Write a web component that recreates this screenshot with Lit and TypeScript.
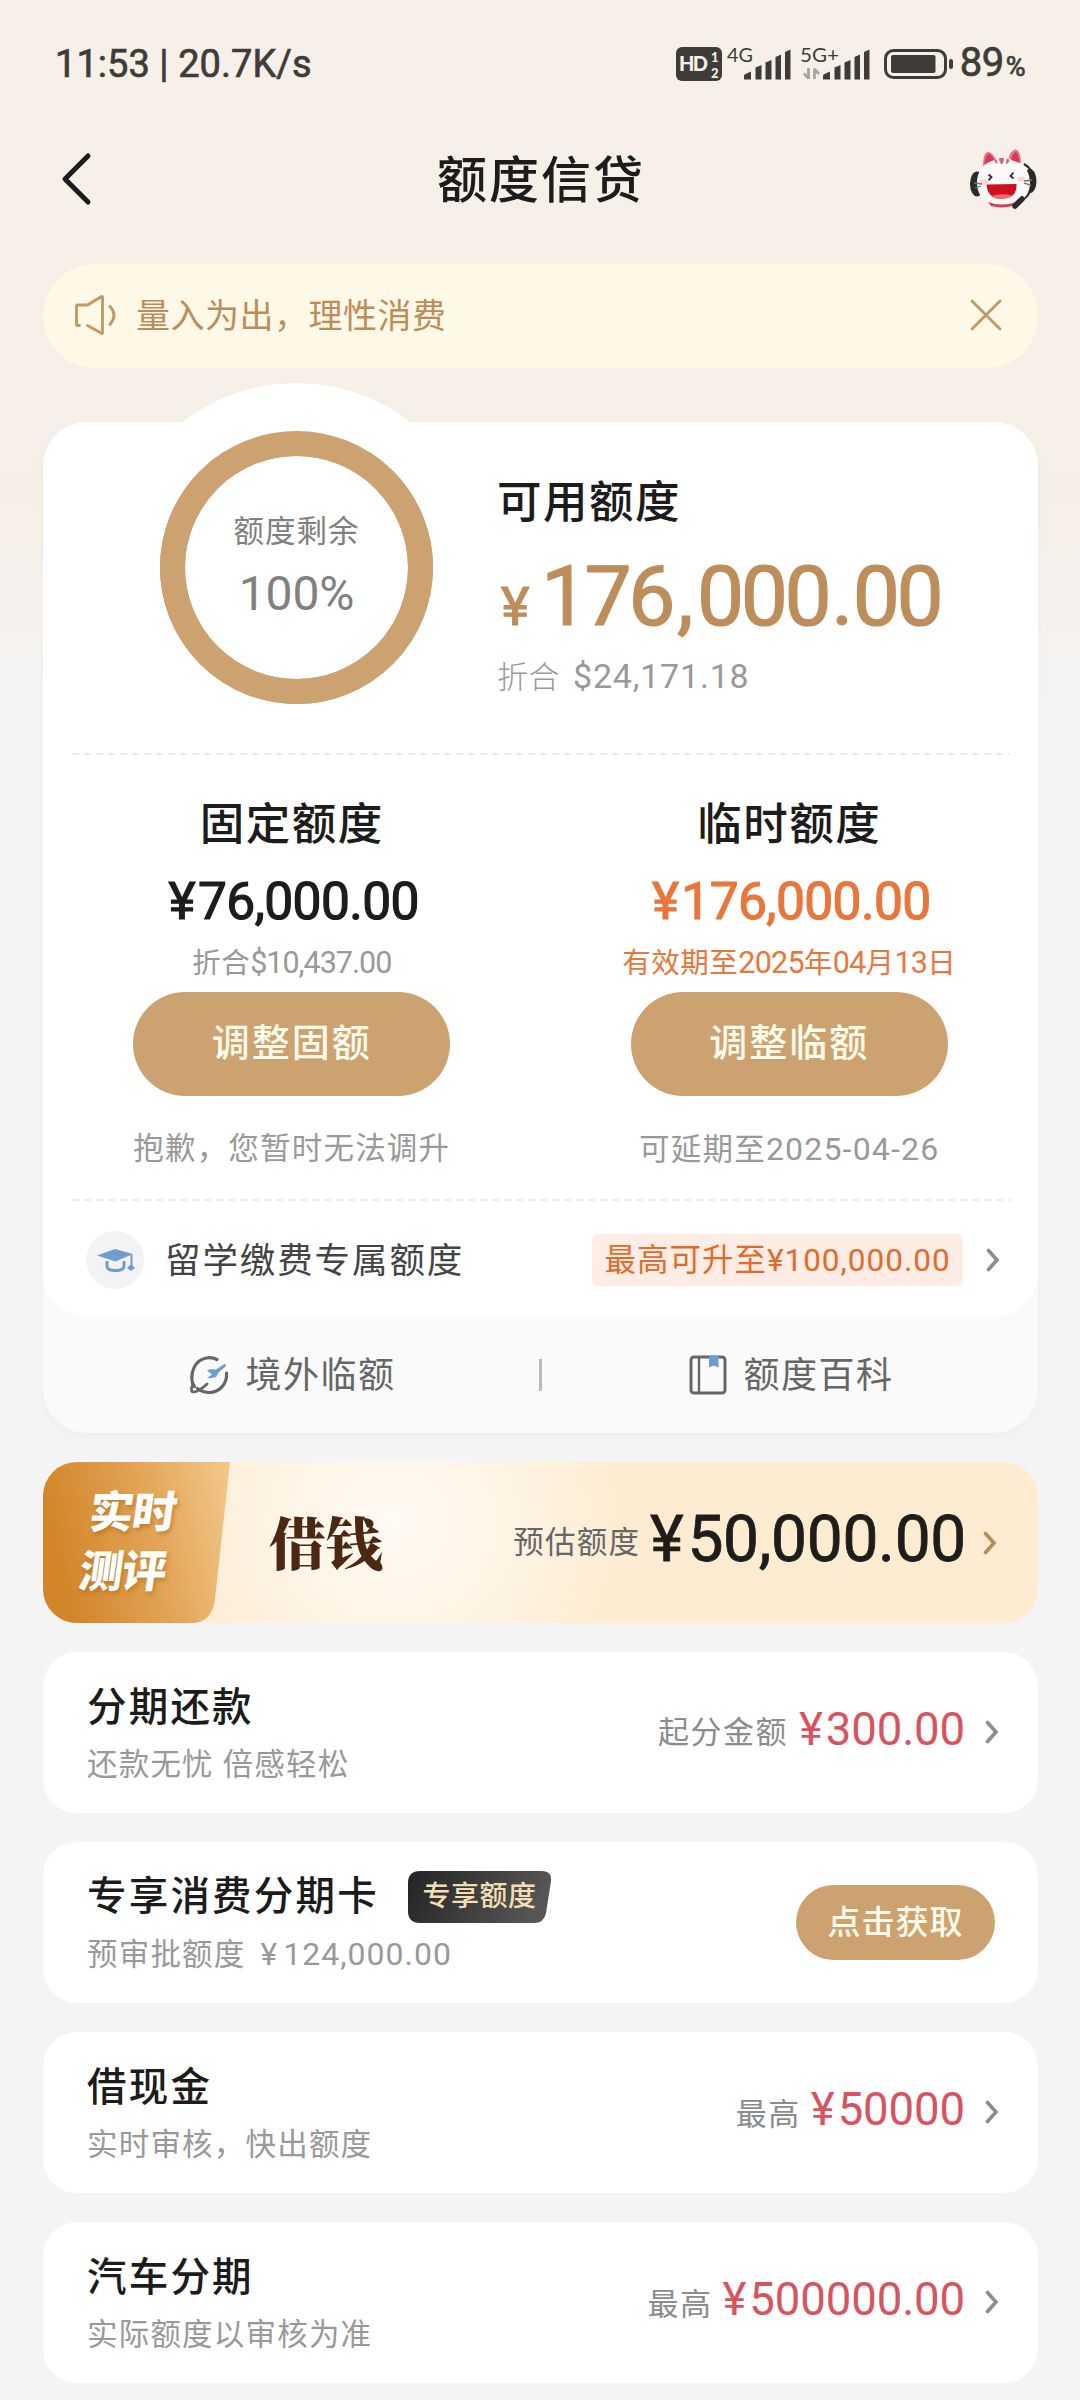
import { LitElement, html, svg, css, nothing } from "lit";
import { customElement, property } from "lit/decorators.js";

const chevron = (color: string) => html`<svg class="chev" width="14" height="24" viewBox="0 0 14 24" fill="none">
  <path d="M2.500 2.500 11 12 2.500 21.500" stroke=${color} stroke-width="3.600" stroke-linejoin="miter" stroke-linecap="round" />
</svg>`;

const bars = () => svg`
  <path d="M0 30.500V27q0-1.500 1.500-2L7 22.500V30.500z" />
  <path d="M11.500 30.500V18.500L17.500 16V30.500z" />
  <path d="M21.500 30.500V13.500L27.500 11V30.500z" />
  <path d="M31.500 30.500V8L37 5.500V30.500z" />
  <path d="M41 30.500V3L46.500.5V30.500z" />`;

@customElement("status-bar")
class StatusBar extends LitElement {
  static styles = css`
    :host {
      display: flex;
      align-items: center;
      justify-content: space-between;
      height: 127px;
      padding: 0 55px 0 55px;
      box-sizing: border-box;
      color: #3f3c38;
      font-size: 38px;
      -webkit-text-stroke: 0.700px #3f3c38;
    }
    .time { letter-spacing: 0.050px; line-height: 44px; }
    .right { display: flex; align-items: center; height: 44px; }
    .right svg { -webkit-text-stroke: 0; }
    .pct { font-size: 40px; line-height: 44px; margin-left: 6px; letter-spacing: -0.500px; padding-top: 3px; }
    .sign { font-size: 27px; margin-left: 2px; }
    text { font-family: Lato, sans-serif; fill: #3f3c38; }
    .hd { fill: #f7f0e9; font-weight: 900; }
  `;
  render() {
    return html`
      <span class="time">11:53 | 20.7K/s</span>
      <div class="right">
        <svg width="280" height="44" viewBox="0 0 280 44">
          <rect x="2" y="5" width="46" height="34" rx="6" fill="#3f3c38" />
          <text class="hd" x="5" y="29" font-size="20" textLength="29">HD</text>
          <text class="hd" x="37" y="19.500" font-size="13">1</text>
          <text class="hd" x="37" y="35.500" font-size="13">2</text>
          <text x="53" y="20" font-size="20" textLength="26" lengthAdjust="spacingAndGlyphs">4G</text>
          <g transform="translate(70 7)" fill="#3f3c38">${bars()}</g>
          <text x="126" y="20" font-size="20" textLength="39" lengthAdjust="spacingAndGlyphs">5G+</text>
          <path d="M134.500 26V37M134.500 36.500L130 31.500M140.500 37V26.500M140.500 27L145 32" fill="none" stroke="#aaa49e" stroke-width="2.800" />
          <g transform="translate(149 7)" fill="#3f3c38">${bars()}</g>
          <rect x="211.500" y="8.500" width="60" height="27" rx="8" fill="none" stroke="#3f3c38" stroke-width="3" />
          <rect x="217" y="13" width="44.500" height="18" rx="2" fill="#3f3c38" />
          <rect x="275" y="17" width="4" height="10" rx="2" fill="#3f3c38" />
        </svg>
        <span class="pct">89<span class="sign">%</span></span>
      </div>`;
  }
}

@customElement("offer-card")
class OfferCard extends LitElement {
  @property() name = "";
  @property() note = "";
  @property() noteAmount = "";
  @property() label = "";
  @property() amount = "";
  @property() badge = "";
  @property() action = "";

  static styles = css`
    :host {
      display: flex;
      align-items: center;
      justify-content: space-between;
      height: 161px;
      box-sizing: border-box;
      padding: 0 43px 0 44px;
      background: #fff;
      border-radius: 34px;
    }
    .left { display: flex; flex-direction: column; gap: 11px; padding-top: 5px; }
    .head { display: flex; align-items: center; height: 48px; gap: 29px; }
    .name { font-size: 39.500px; letter-spacing: 2.200px; color: #1c1c1c; font-weight: 500; line-height: 48px; }
    .note { font-size: 30.500px; letter-spacing: 1.200px; color: #999; line-height: 44px; white-space: pre; }
    .yen { font-size: 31.500px; margin: 0 5px 0 6px; }
    .num { font-size: 32px; letter-spacing: 1px; }
    .badge {
      position: relative;
      display: flex;
      align-items: center;
      justify-content: center;
      width: 143px;
      height: 52px;
      color: #f2ddb4;
      font-size: 28px;
      font-weight: 500;
      letter-spacing: 0.500px;
      line-height: 52px;
    }
    .badge svg { position: absolute; inset: 0; }
    .badge span { position: relative; }
    .right { display: flex; align-items: center; padding-bottom: 6px; }
    .label { font-size: 31px; letter-spacing: 1.500px; color: #8c8c8c; line-height: 40px; padding-top: 6px; margin-right: 11px; }
    .label.low { padding-top: 11px; margin-right: 10px; }
    .amount { display: flex; font-size: 45.500px; color: #d9535f; line-height: 52px; margin-right: 20px; letter-spacing: -0.100px; }
    .amount span { margin-right: 3px; }
    .chev { margin-top: 4px; margin-right: -4px; }
    .action {
      width: 199px;
      height: 75px;
      border-radius: 38px;
      background: #cca270;
      color: #fffbea;
      font-size: 33px;
      letter-spacing: 1px;
      line-height: 76px;
      font-weight: 500;
      text-align: center;
    }
  `;
  render() {
    return html`
      <div class="left">
        <div class="head">
          <span class="name">${this.name}</span>
          ${this.badge
            ? html`<span class="badge"><svg width="143" height="52" viewBox="0 0 143 52">
                <defs><linearGradient id="g" x1="0" y1="0" x2="1" y2="0.200">
                  <stop offset="0" stop-color="#232323" /><stop offset="1" stop-color="#565656" />
                </linearGradient></defs>
                <path d="M12 0H134Q144 0 143 10L138 42Q136 52 126 52H12Q0 52 0 40V12Q0 0 12 0Z" fill="url(#g)" />
              </svg><span>${this.badge}</span></span>`
            : nothing}
        </div>
        <span class="note">${this.note}${this.noteAmount
          ? html`<span class="yen"> ¥</span><span class="num">${this.noteAmount}</span>`
          : nothing}</span>
      </div>
      ${this.action
        ? html`<span class="action">${this.action}</span>`
        : html`<div class="right">
            <span class="label ${this.label.length < 3 ? "low" : ""}">${this.label}</span>
            <div class="amount"><span>¥</span>${this.amount}</div>
            ${chevron("#8c8c8c")}
          </div>`}`;
  }
}

@customElement("app-root")
class AppRoot extends LitElement {
  static styles = css`
    :host {
      display: block;
      width: 1080px;
      height: 2400px;
      overflow: hidden;
      background: linear-gradient(#f7f0e9 0, #f6efe7 500px, #f4f4f4 730px);
      font-family: Roboto, "Noto Sans CJK SC", sans-serif;
      color: #1c1c1c;
    }
    .nav {
      display: flex;
      align-items: center;
      justify-content: space-between;
      height: 104px;
      padding: 0 42px 0 60px;
    }
    .nav h1 { margin: 3px 0 0; font-size: 50px; letter-spacing: 2px; font-weight: 500; line-height: 60px; padding-left: 18px; }
    .page { display: flex; flex-direction: column; padding: 33px 42px 0 43px; }
    .notice {
      display: flex;
      align-items: center;
      height: 104px;
      border-radius: 52px;
      background: #fef8e7;
      color: #bd8c5b;
      font-size: 34px;
      letter-spacing: 0.500px;
      line-height: 44px;
      padding: 0 36px 0 31px;
    }
    .notice span { flex: 1; padding-left: 18px; }
    .notice svg { margin-top: -2px; }

    .card {
      margin-top: 54px;
      height: 1011px;
      border-radius: 44px;
      background: #fafafa;
      box-shadow: 0 4px 8px rgba(0, 0, 0, 0.025);
    }
    .main { height: 895px; border-radius: 44px; background: #fff; }
    .hero { display: flex; height: 332px; align-items: flex-start; }
    .ring {
      position: relative;
      display: flex;
      flex-direction: column;
      align-items: center;
      justify-content: center;
      gap: 15px;
      width: 223px;
      height: 223px;
      margin: 9px 0 0 117px;
      border: 25px solid #cca270;
      border-radius: 50%;
      color: #808080;
    }
    .ring::before {
      content: "";
      position: absolute;
      inset: -73px;
      border-radius: 50%;
      background: #fff;
      clip-path: inset(0 0 300px 0);
    }
    .ring::after {
      content: "";
      position: absolute;
      inset: -25px;
      border-radius: 50%;
      border: 25px solid #cca270;
    }
    .ring-label { font-size: 30.500px; letter-spacing: 1px; line-height: 40px; margin-top: -3px; }
    .ring-value { font-size: 48px; line-height: 54px; letter-spacing: -0.200px; }
    .avail { display: flex; flex-direction: column; margin-left: 64px; padding-top: 55px; }
    h2 { margin: 0; font-size: 44.500px; letter-spacing: 1.500px; font-weight: 500; line-height: 52px; }
    .big { display: flex; align-items: baseline; color: #bd8e5c; margin-top: 23px; height: 90px; line-height: 90px; font-size: 84px; letter-spacing: -3.500px; -webkit-text-stroke: 1.200px #bd8e5c; }
    .big .yen { font-size: 54px; margin: 0 15px 0 4px; }
    .big .comma { margin: 0 7px 0 5px; }
    .big .dot { margin: 0 3px; }
    .conv { font-size: 31px; color: #999; line-height: 44px; margin-top: 12px; letter-spacing: 0.500px; display: flex; align-items: baseline; gap: 13px; font-weight: 300; }
    .conv .num { font-size: 34px; letter-spacing: 0.800px; font-weight: 400; }
    .dash { height: 2px; margin: -1px 28px -1px 29px; background: repeating-linear-gradient(90deg, #ebebeb 0 7px, transparent 7px 12px); }
    .cols { display: grid; grid-template-columns: 1fr 1fr; height: 446px; }
    .col { display: flex; flex-direction: column; align-items: center; padding-top: 45px; }
    .sum { display: flex; font-size: 51.500px; -webkit-text-stroke: 1.200px currentColor; line-height: 60px; margin-top: 21px; letter-spacing: -0.600px; }
    .sum span { margin: 0 3px 0 4px; }
    .small { font-size: 28.500px; letter-spacing: 0.500px; color: #999; line-height: 36px; margin-top: 13px; }
    .small .num { font-size: 30.500px; letter-spacing: -1px; }
    .orange { color: #e9763b; }
    .small.orange .num { letter-spacing: -0.800px; }
    .btn {
      width: 317px;
      height: 104px;
      margin-top: 10px;
      border-radius: 52px;
      background: #cca270;
      color: #fffbea;
      font-size: 38px;
      letter-spacing: 2px;
      font-weight: 500;
      line-height: 103px;
      text-align: center;
    }
    .hint { font-size: 30.500px; letter-spacing: 1.200px; color: #999; line-height: 40px; margin-top: 33px; }
    .hint .num { font-size: 32px; letter-spacing: 1.200px; }
    .study { display: flex; align-items: center; height: 117px; padding: 1px 38px 0 43px; }
    .study .name { font-size: 35.500px; letter-spacing: 1.900px; color: #444; line-height: 44px; margin-left: 21px; padding-top: 2px; flex: 1; }
    .tag { height: 52px; width: 371px; text-align: center; background: #feede4; border-radius: 6px; color: #e36a2b; font-size: 31.500px; letter-spacing: 1px; line-height: 54px; margin-right: 23px; }
    .links { display: flex; align-items: center; height: 115px; color: #666; font-size: 36px; line-height: 44px; letter-spacing: 1.500px; }
    .link { flex: 1; display: flex; align-items: center; justify-content: center; gap: 16px; padding-left: 3px; }
    .link span { padding-top: 2px; }
    .sep { width: 3px; height: 32px; background: #bbb; }

    .banner {
      display: flex;
      align-items: center;
      height: 161px;
      margin-top: 29px;
      border-radius: 34px;
      overflow: hidden;
      background: radial-gradient(ellipse 230px 220px at 350px 60px, #fffaf3, rgba(255, 249, 240, 0.700) 45%, rgba(253, 236, 209, 0)), #fdecd1;
    }
    .rate { position: relative; width: 188px; height: 161px; flex: none; }
    .rate svg { position: absolute; inset: 0; }
    .rate div {
      position: relative;
      display: flex;
      flex-direction: column;
      padding-top: 22px;
      font-size: 44px;
      font-weight: 900;
      line-height: 59px;
      color: #fff;
      letter-spacing: -1px;
      text-shadow: 2px 3px 4px rgba(160, 90, 10, 0.450);
      transform: skewX(-8deg);
    }
    .rate span:first-child { padding-left: 44px; }
    .rate span:last-child { padding-left: 42px; }
    .borrow { margin-left: 38px; padding-bottom: 6px; flex: 1; color: #4c2813; font-family: "Noto Serif CJK SC", "Noto Serif SC", "Source Han Serif SC", "Noto Sans CJK SC", serif; font-weight: 900; font-size: 57px; line-height: 70px; letter-spacing: 0; }
    .est { font-size: 30.500px; letter-spacing: 1.200px; color: #666; line-height: 40px; margin-right: 10px; }
    .loan { display: flex; font-size: 64px; line-height: 80px; letter-spacing: -0.300px; color: #1f1d1a; padding-bottom: 6px; margin-right: 17px; -webkit-text-stroke: 0.800px #1f1d1a; }
    .loan span { margin-right: 4px; }
    .banner .chev { margin-right: 41px; }
    .list { display: flex; flex-direction: column; gap: 29px; margin-top: 29px; }
  `;

  render() {
    return html`
      <status-bar></status-bar>
      <div class="nav">
        <svg width="34" height="56" viewBox="0 0 34 56" fill="none">
          <path d="M28 5 5 28 28 51" stroke="#1c1c1c" stroke-width="5" stroke-linecap="round" stroke-linejoin="round" />
        </svg>
        <h1>额度信贷</h1>
        <svg width="68" height="60" viewBox="0 0 68 60">
          <ellipse cx="7" cy="35" rx="7" ry="12.500" fill="#2b2a2a" />
          <ellipse cx="60" cy="32" rx="6.500" ry="12" fill="#2b2a2a" />
          <path d="M54 15Q63 20 63 30Q63 43 53 51" fill="none" stroke="#2b2a2a" stroke-width="2.200" />
          <path d="M13 18Q13 3 18.500 3Q24 4 27 14Z" fill="#e9718a" />
          <path d="M38 12Q40 1 45.500.5Q51 1 51 16Z" fill="#e9718a" />
          <path d="M33 9.500C50 8.500 60 20 60 34C60 48 48 57 33 57C18 57 7 48 7 34C7 20 17 10 33 9.500Z" fill="#fdf9f9" />
          <path d="M14.500 15Q16 4.500 19.500 5Q23 7 24 11ZM41 11Q43 3 46 3Q49 6 49.500 14Z" fill="#d83a56" />
          <path d="M24 10Q28 10 27.500 15Q24 13 24 10ZM29 9H34Q34 14 31.500 15.500Q29 13 29 9ZM36.500 9.500Q40 10 39 12.500Q38 15 36 15Z" fill="#d5697a" />
          <path d="M18.500 25.500 21.500 28 18.500 31.500M43.500 23.500 40.500 27 43.500 29.500" fill="none" stroke="#2b2a2a" stroke-width="1.800" />
          <ellipse cx="14" cy="33" rx="4" ry="2.500" fill="#f9d5da" /><ellipse cx="51" cy="30" rx="4" ry="2.500" fill="#f9d5da" />
          <path d="M4 34 12 35M5 39 11 37M54 32 62 31M54 34 61 36" stroke="#77706e" stroke-width="1.300" />
          <path d="M16.500 35.500Q31 35 46.500 35Q47.500 49 32 49.500Q17.500 50 16.500 35.500Z" fill="#cf1020" />
          <path d="M21 47Q31 44 42 46.500Q38 50 31 50Q24 50 21 47Z" fill="#f06a68" />
          <path d="M18 53Q32 58 46 53L44 56.500Q32 60 21 57Z" fill="#d83a56" />
          <path d="M52 50 45 57" stroke="#2b2a2a" stroke-width="5.500" stroke-linecap="round" />
        </svg>
      </div>
      <div class="page">
        <div class="notice">
          <svg width="44" height="42" viewBox="0 0 44 42" fill="none" stroke="#c39666" stroke-width="2.800" stroke-linecap="round" stroke-linejoin="round">
            <path d="M5.500 31.500H4Q2.500 31.500 2.500 30V12.500Q2.500 11 4 11H13.500L27.500 2.500Q28.500 2 28.500 3.500V38.500Q28.500 40 27.500 39.300L13.500 31.500" />
            <path d="M36 12.500Q44 21 36 30.500" />
          </svg>
          <span>量入为出，理性消费</span>
          <svg width="32" height="32" viewBox="0 0 32 32"><path d="M2 2 30 30M30 2 2 30" stroke="#c39666" stroke-width="2.800" stroke-linecap="round" /></svg>
        </div>

        <div class="card">
          <div class="main">
            <div class="hero">
              <div class="ring">
                <span class="ring-label">额度剩余</span>
                <span class="ring-value">100%</span>
              </div>
              <div class="avail">
                <h2>可用额度</h2>
                <div class="big"><span class="yen">¥</span>176<span class="comma">,</span>000<span class="dot">.</span>00</div>
                <div class="conv"><span>折合</span><span class="num">$24,171.18</span></div>
              </div>
            </div>
            <div class="dash"></div>
            <div class="cols">
              <div class="col">
                <h2>固定额度</h2>
                <div class="sum"><span>¥</span>76,000.00</div>
                <div class="small">折合<span class="num">$10,437.00</span></div>
                <div class="btn">调整固额</div>
                <div class="hint">抱歉，您暂时无法调升</div>
              </div>
              <div class="col">
                <h2>临时额度</h2>
                <div class="sum orange"><span>¥</span>176,000.00</div>
                <div class="small orange">有效期至<span class="num">2025</span>年<span class="num">04</span>月<span class="num">13</span>日</div>
                <div class="btn">调整临额</div>
                <div class="hint">可延期至<span class="num">2025-04-26</span></div>
              </div>
            </div>
            <div class="dash"></div>
            <div class="study">
              <svg width="58" height="58" viewBox="0 0 58 58">
                <circle cx="29" cy="29" r="29" fill="#f3f3f3" />
                <path d="M11 24.500 29 18 47 23 29.500 30.500Z" fill="#6f9dd0" />
                <path d="M45.500 24V36" stroke="#6f9dd0" stroke-width="2" />
                <path d="M45 33 49 37 45 40 41 37Z" fill="#6f9dd0" />
                <path d="M21 30V35Q21 39.500 29.500 39.500Q38 39.500 38 35V30" fill="none" stroke="#6f9dd0" stroke-width="3" />
              </svg>
              <span class="name">留学缴费专属额度</span>
              <span class="tag">最高可升至¥100,000.00</span>
              ${chevron("#8c8c8c")}
            </div>
          </div>
          <div class="links">
            <div class="link">
              <svg width="40" height="40" viewBox="0 0 40 40" fill="none" stroke="#666" stroke-width="3.200" stroke-linecap="round">
                <path d="M28 4.500Q23 2 17.500 3C6 5 1 17 3.500 28L5.500 31.500" />
                <path d="M37.500 18C38.500 29 30 37.500 20.500 37.500Q14 37.500 8.500 33.500" />
                <path d="M4 29.500Q1.500 34 3 36.500Q7 39 18 29" stroke-width="2.800" />
                <path d="M35.500 9Q38 9.500 36.500 11.500L29.500 17.500 27 22Q21 24 18.500 22.500L23 19.500 18 15.500Q20 13.500 27 14.500Z" fill="#6f9dd0" stroke="none" />
              </svg>
              <span>境外临额</span>
            </div>
            <div class="sep"></div>
            <div class="link">
              <svg width="38" height="40" viewBox="0 0 38 40" fill="none" stroke="#666" stroke-width="3">
                <rect x="2" y="2" width="34" height="36" rx="3" />
                <path d="M10 2V38" stroke-width="2.400" />
                <path d="M20 .5H29.500V12.500L24.800 10.500 20 12.500Z" fill="#6f9dd0" stroke="none" />
              </svg>
              <span>额度百科</span>
            </div>
          </div>
        </div>

        <div class="banner">
          <div class="rate">
            <svg width="188" height="161" viewBox="0 0 188 161">
              <defs><linearGradient id="gold" x1="0" y1="0.200" x2="1" y2="0">
                <stop offset="0" stop-color="#d28629" /><stop offset="0.500" stop-color="#e2a355" /><stop offset="1" stop-color="#f3c88c" />
              </linearGradient></defs>
              <path d="M0 0H187L172 137Q169 161 148 161H0Z" fill="url(#gold)" />
            </svg>
            <div><span>实时</span><span>测评</span></div>
          </div>
          <span class="borrow">借钱</span>
          <span class="est">预估额度</span>
          <div class="loan"><span>¥</span>50,000.00</div>
          ${chevron("#b98b57")}
        </div>

        <div class="list">
          <offer-card name="分期还款" note="还款无忧 倍感轻松" label="起分金额" amount="300.00"></offer-card>
          <offer-card name="专享消费分期卡" note="预审批额度" .noteAmount=${"124,000.00"} badge="专享额度" action="点击获取"></offer-card>
          <offer-card name="借现金" note="实时审核，快出额度" label="最高" amount="50000"></offer-card>
          <offer-card name="汽车分期" note="实际额度以审核为准" label="最高" amount="500000.00"></offer-card>
        </div>
      </div>`;
  }
}
